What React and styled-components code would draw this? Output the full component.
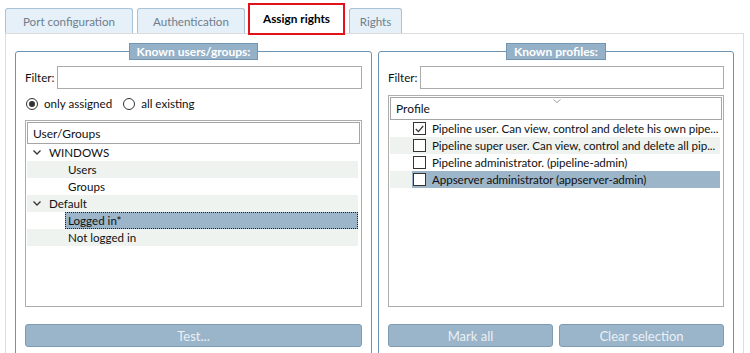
import React from 'react';
import styled, { createGlobalStyle, css } from 'styled-components';

const GlobalStyle = createGlobalStyle`
  html, body {
    margin: 0;
    padding: 0;
    background: #ffffff;
  }
  body {
    font-family: Lato, "Liberation Sans", sans-serif;
    font-size: 11.6px;
    color: #111;
  }
`;

const Page = styled.div`
  width: 750px;
  height: 353px;
  overflow: hidden;
  box-sizing: border-box;
  padding: 3px 6px 0 5px;
`;

const TabBar = styled.div`
  display: flex;
  align-items: flex-end;
  gap: 4px;
  height: 32px;
  margin-bottom: -2px;
  position: relative;
  z-index: 1;
`;

const Tab = styled.div`
  box-sizing: border-box;
  width: ${(p) => p.$w}px;
  margin-left: ${(p) => p.$ml || 0}px;
  display: flex;
  align-items: center;
  justify-content: center;
  border-radius: 3px 3px 0 0;
  ${(p) =>
    p.$active
      ? css`
          height: 32px;
          border: 2px solid #e3111c;
          border-radius: 0;
          background: #fff;
          color: #000;
          font-weight: 700;
          font-size: 11.8px;
          padding-bottom: 2px;
        `
      : css`
          height: 25px;
          margin-bottom: 2px;
          border: 1px solid #a9c2d6;
          border-bottom: none;
          background: #e6f0f8;
          color: #6e7e8c;
          font-size: 11.6px;
          padding-top: 1px;
        `}
`;

const Panel = styled.div`
  box-sizing: border-box;
  height: 330px;
  border: 1px solid #dcdcdc;
  border-bottom: none;
  padding: 9px 9px 0 9px;
  display: grid;
  grid-template-columns: 357px 356px;
  gap: 6px;
`;

const GroupBox = styled.fieldset`
  margin: 0;
  min-width: 0;
  height: 330px;
  box-sizing: border-box;
  border: 1px solid #6d93b1;
  border-radius: 3px;
  padding: 0 9px;
`;

const Legend = styled.legend`
  margin: 0 auto;
  box-sizing: border-box;
  height: 17px;
  line-height: 15px;
  padding: 0 7px;
  background: #94b1c8;
  border: 1px solid #7397b3;
  color: #fff;
  font-weight: 700;
  font-size: 12px;
`;

const GroupBody = styled.div`
  display: flex;
  flex-direction: column;
  padding-top: 6px;
`;

const FilterRow = styled.div`
  display: flex;
  align-items: center;
  height: 23px;
`;

const FilterLabel = styled.label`
  width: 32px;
  flex: none;
`;

const FilterInput = styled.div`
  flex: 1;
  height: 23px;
  box-sizing: border-box;
  border: 1px solid #ababab;
  background: #fff;
`;

const RadioRow = styled.div`
  display: flex;
  align-items: center;
  height: 17px;
  margin-top: 6px;
  padding-left: 1px;
`;

const RadioOption = styled.div`
  display: flex;
  align-items: center;
  gap: 6px;
  margin-right: 11px;
`;

const RadioCircle = styled.span`
  box-sizing: border-box;
  width: 12px;
  height: 12px;
  border: 1px solid #333;
  border-radius: 50%;
  display: flex;
  align-items: center;
  justify-content: center;
  &::after {
    content: '';
    width: 6px;
    height: 6px;
    border-radius: 50%;
    background: ${(p) => (p.$on ? '#333' : 'transparent')};
  }
`;

const ListBox = styled.div`
  box-sizing: border-box;
  height: ${(p) => p.$h}px;
  margin-top: ${(p) => p.$mt}px;
  border: 1px solid #adadad;
  padding: 1px 3px 1px 1px;
  background: #fff;
`;

const ListHeader = styled.div`
  position: relative;
  box-sizing: border-box;
  height: ${(p) => p.$h}px;
  border: 1px solid #a5a5a5;
  display: flex;
  align-items: center;
  padding-left: 5px;
  margin: 0 -2px 0 0;
  font-size: 12px;
`;

const SortMark = styled.svg`
  position: absolute;
  top: 1px;
  left: 162px;
`;

const TreeRow = styled.div`
  height: 17px;
  display: flex;
  align-items: center;
  padding-left: ${(p) => p.$indent}px;
  background: ${(p) => (p.$striped ? '#eef3ef' : 'transparent')};
`;

const Chevron = styled.svg`
  flex: none;
  margin-right: 5px;
`;

const RowLabel = styled.span`
  flex: 1;
  min-width: 0;
  height: 17px;
  box-sizing: border-box;
  display: flex;
  align-items: center;
  gap: 6px;
  padding-left: 2px;
  white-space: nowrap;
  letter-spacing: ${(p) => (p.$tight ? '-0.06px' : 'normal')};
  border: 1px solid transparent;
  ${(p) =>
    p.$selected &&
    css`
      background: #9db5c9;
      ${p.$focus && 'border: 1px dotted #222;'}
    `}
`;

const CheckBox = styled.span`
  flex: none;
  box-sizing: border-box;
  width: 13px;
  height: 13px;
  border: 1px solid #333;
  background: #fff;
  display: flex;
  align-items: center;
  justify-content: center;
  margin-left: -2px;
`;

const ButtonRow = styled.div`
  display: flex;
  gap: 6px;
  margin-top: 17px;
`;

const Button = styled.button`
  flex: 1;
  height: 23px;
  border: 1px solid #7e9db5;
  border-radius: 3px;
  background: #9ab5ca;
  color: #eaf0f5;
  font-family: Lato, "Liberation Sans", sans-serif;
  font-size: 13px;
  padding: 0;
`;

const tree = [
  { label: 'WINDOWS', parent: true },
  { label: 'Users' },
  { label: 'Groups' },
  { label: 'Default', parent: true },
  { label: 'Logged in*', selected: true },
  { label: 'Not logged in' },
];

const profiles = [
  { label: 'Pipeline user. Can view, control and delete his own pipe...', checked: true },
  { label: 'Pipeline super user. Can view, control and delete all pip...' },
  { label: 'Pipeline administrator. (pipeline-admin)' },
  { label: 'Appserver administrator (appserver-admin)', selected: true },
];

function ChevronDown() {
  return (
    <Chevron width="8" height="5" viewBox="0 0 8 5">
      <path d="M0.5 0.5 L4 4 L7.5 0.5" fill="none" stroke="#333" strokeWidth="1.3" />
    </Chevron>
  );
}

export default function App() {
  return (
    <Page>
      <GlobalStyle />
      <TabBar>
        <Tab $w={128}>Port configuration</Tab>
        <Tab $w={108}>Authentication</Tab>
        <Tab $w={97} $ml={-1} $active>Assign rights</Tab>
        <Tab $w={53}>Rights</Tab>
      </TabBar>
      <Panel>
        <GroupBox>
          <Legend>Known users/groups:</Legend>
          <GroupBody>
            <FilterRow>
              <FilterLabel>Filter:</FilterLabel>
              <FilterInput />
            </FilterRow>
            <RadioRow>
              <RadioOption>
                <RadioCircle $on />
                only assigned
              </RadioOption>
              <RadioOption>
                <RadioCircle />
                all existing
              </RadioOption>
            </RadioRow>
            <ListBox $h={187} $mt={8}>
              <ListHeader $h={22}>User/Groups</ListHeader>
              {tree.map((r, i) => (
                <TreeRow key={r.label} $striped={i % 2 === 1} $indent={r.parent ? 6 : 38}>
                  {r.parent && <ChevronDown />}
                  <RowLabel $selected={r.selected} $focus>
                    {r.label}
                  </RowLabel>
                </TreeRow>
              ))}
            </ListBox>
            <ButtonRow>
              <Button>Test...</Button>
            </ButtonRow>
          </GroupBody>
        </GroupBox>
        <GroupBox>
          <Legend>Known profiles:</Legend>
          <GroupBody>
            <FilterRow>
              <FilterLabel>Filter:</FilterLabel>
              <FilterInput />
            </FilterRow>
            <ListBox $h={212} $mt={6}>
              <ListHeader $h={23}>
                Profile
                <SortMark width="8" height="4" viewBox="0 0 8 4">
                  <path d="M0.5 0.5 L4 3.5 L7.5 0.5" fill="none" stroke="#a0a0a0" strokeWidth="1" />
                </SortMark>
              </ListHeader>
              {profiles.map((r, i) => (
                <TreeRow key={r.label} $striped={i % 2 === 1} $indent={22}>
                  <RowLabel $selected={r.selected} $tight>
                    <CheckBox>
                      {r.checked && (
                        <svg width="9" height="8" viewBox="0 0 9 8">
                          <path d="M0.8 4 L3.4 6.6 L8.2 1" fill="none" stroke="#333" strokeWidth="1.2" />
                        </svg>
                      )}
                    </CheckBox>
                    {r.label}
                  </RowLabel>
                </TreeRow>
              ))}
            </ListBox>
            <ButtonRow>
              <Button>Mark all</Button>
              <Button>Clear selection</Button>
            </ButtonRow>
          </GroupBody>
        </GroupBox>
      </Panel>
    </Page>
  );
}
